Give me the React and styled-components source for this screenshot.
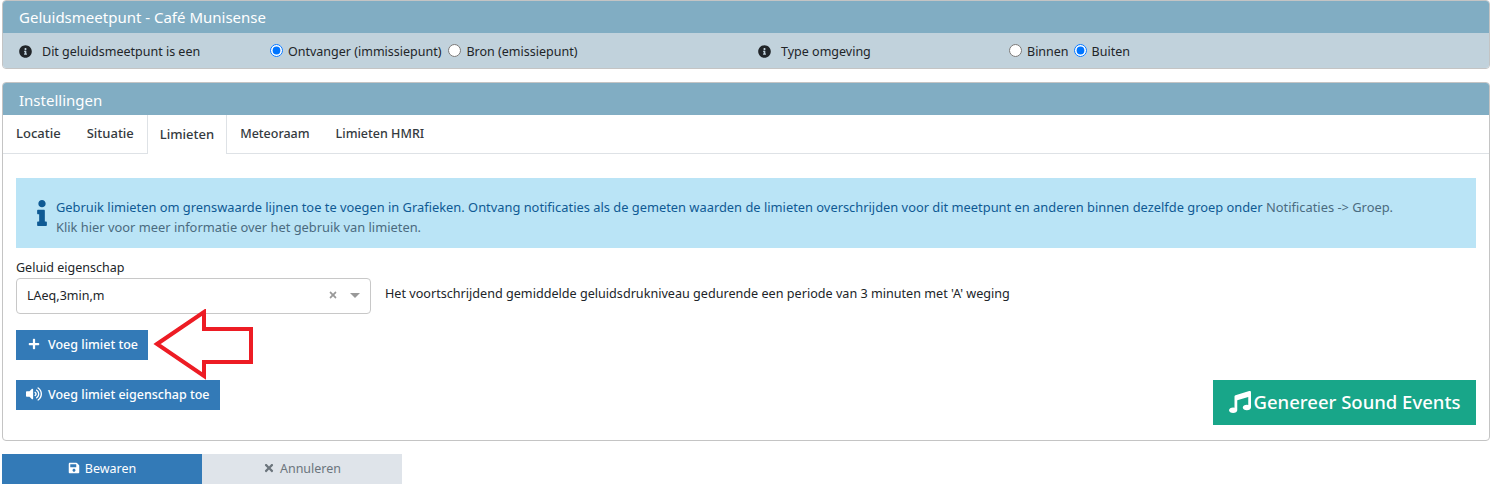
import styled, { createGlobalStyle } from 'styled-components';
import { FaInfo, FaInfoCircle, FaMusic, FaPlus, FaSave, FaTimes, FaVolumeUp } from 'react-icons/fa';

const GlobalStyle = createGlobalStyle`
  html, body {
    margin: 0;
    background: #fff;
  }
  body {
    font-family: 'Noto Sans', 'DejaVu Sans', sans-serif;
    font-size: 12.5px;
    color: #212529;
  }
`;

const App = () => {
  return (
    <Page>
      <GlobalStyle />
      <Panel>
        <PanelHeader>Geluidsmeetpunt - Café Munisense</PanelHeader>
        <OptionBar>
          <OptionLabel $width="251px">
            <FaInfoCircle size={13} />
            <span>Dit geluidsmeetpunt is een</span>
          </OptionLabel>
          <RadioGroup $width="488px" $gap="7px">
            <RadioLabel>
              <input type="radio" name="kind" defaultChecked />
              Ontvanger (immissiepunt)
            </RadioLabel>
            <RadioLabel>
              <input type="radio" name="kind" />
              Bron (emissiepunt)
            </RadioLabel>
          </RadioGroup>
          <OptionLabel $width="251px">
            <FaInfoCircle size={13} />
            <span>Type omgeving</span>
          </OptionLabel>
          <RadioGroup $gap="5px">
            <RadioLabel>
              <input type="radio" name="env" />
              Binnen
            </RadioLabel>
            <RadioLabel>
              <input type="radio" name="env" defaultChecked />
              Buiten
            </RadioLabel>
          </RadioGroup>
        </OptionBar>
      </Panel>

      <SettingsPanel>
        <SettingsHeader>Instellingen</SettingsHeader>
        <Tabs>
          <Tab $size="13px">Locatie</Tab>
          <Tab $size="13px">Situatie</Tab>
          <Tab $size="13px" $active>
            Limieten
          </Tab>
          <Tab $size="12.5px">Meteoraam</Tab>
          <Tab $size="12.5px">Limieten HMRI</Tab>
        </Tabs>
        <TabBody>
          <Alert>
            <AlertIcon>
              <FaInfo size={26} />
            </AlertIcon>
            <AlertText>
              <div>
                Gebruik limieten om grenswaarde lijnen toe te voegen in Grafieken. Ontvang notificaties als de gemeten
                waarden de limieten overschrijden voor dit meetpunt en anderen binnen dezelfde groep onder{' '}
                <Muted>Notificaties -&gt; Groep.</Muted>
              </div>
              <Muted>Klik hier voor meer informatie over het gebruik van limieten.</Muted>
            </AlertText>
          </Alert>

          <FieldLabel>Geluid eigenschap</FieldLabel>
          <FieldRow>
            <Select>
              <span>LAeq,3min,m</span>
              <SelectControls>
                <FaTimes size={10} />
                <Caret />
              </SelectControls>
            </Select>
            <FieldHint>Het voortschrijdend gemiddelde geluidsdrukniveau gedurende een periode van 3 minuten met 'A' weging</FieldHint>
          </FieldRow>

          <AddRow>
            <BlueButton>
              <ButtonIcon>
                <FaPlus size={12} />
              </ButtonIcon>
              Voeg limiet toe
            </BlueButton>
            <Arrow width="102" height="72" viewBox="0 0 102 72">
              <path d="M4 35 L51 3 L51 20 L98 20 L98 53 L51 53 L51 67 Z" fill="#fff" stroke="#ed1c24" strokeWidth="4" />
            </Arrow>
          </AddRow>

          <BottomRow>
            <BlueButton>
              <ButtonIcon>
                <FaVolumeUp size={16} />
              </ButtonIcon>
              Voeg limiet eigenschap toe
            </BlueButton>
            <GreenButton>
              <FaMusic size={22} />
              Genereer Sound Events
            </GreenButton>
          </BottomRow>
        </TabBody>
      </SettingsPanel>

      <Footer>
        <SaveButton>
          <FaSave size={12} />
          Bewaren
        </SaveButton>
        <CancelButton>
          <FaTimes size={12} />
          Annuleren
        </CancelButton>
      </Footer>
    </Page>
  );
};

const Page = styled.div`
  width: 1493px;
  height: 485px;
  padding: 0 3px 0 2px;
  box-sizing: border-box;
  overflow: hidden;
`;

const Panel = styled.section`
  border: 1px solid #c4c4c4;
  border-radius: 4px;
  overflow: hidden;
`;

const SettingsPanel = styled(Panel)`
  margin-top: 13px;
`;

const PanelHeader = styled.h2`
  margin: 0;
  height: 32px;
  padding: 0 16px;
  box-sizing: border-box;
  display: flex;
  align-items: center;
  background: #81adc3;
  color: #fff;
  font-size: 15px;
  font-weight: 400;
`;

const SettingsHeader = styled(PanelHeader)`
  padding-top: 2px;
`;

const OptionBar = styled.div`
  height: 35px;
  padding: 2px 16px 0;
  box-sizing: border-box;
  display: flex;
  align-items: center;
  background: #c1d2dc;
`;

const OptionLabel = styled.div`
  width: ${(p) => p.$width};
  display: flex;
  align-items: center;
  gap: 10px;
  color: #212529;
`;

const RadioGroup = styled.div`
  width: ${(p) => p.$width || 'auto'};
  display: flex;
  align-items: center;
  gap: ${(p) => p.$gap};
`;

const RadioLabel = styled.label`
  display: flex;
  align-items: center;
  gap: 5px;

  input {
    margin: 0 0 2px;
    width: 13px;
    height: 13px;
  }
`;

const Tabs = styled.nav`
  height: 39px;
  display: flex;
  border-bottom: 1px solid #dee2e6;
  box-sizing: border-box;
`;

const Tab = styled.a`
  padding: 0 12px 2px;
  display: flex;
  align-items: center;
  font-size: ${(p) => p.$size};
  font-weight: 500;
  color: #343a40;
  box-sizing: border-box;
  height: ${(p) => (p.$active ? '39px' : '38px')};
  background: #fff;
  border-left: 1px solid ${(p) => (p.$active ? '#dee2e6' : 'transparent')};
  border-right: 1px solid ${(p) => (p.$active ? '#dee2e6' : 'transparent')};
`;

const TabBody = styled.div`
  padding: 24px 13px 15px;
`;

const Alert = styled.div`
  height: 70px;
  display: flex;
  align-items: center;
  padding-left: 20px;
  gap: 8px;
  background: #bae4f6;
  color: #0f5a94;
`;

const AlertIcon = styled.div`
  width: 12px;
  display: flex;
  justify-content: center;
  color: #0f5a94;
`;

const AlertText = styled.div`
  padding-top: 8px;
  font-size: 12.86px;
  line-height: 20px;
`;

const Muted = styled.span`
  color: #4a6b80;
`;

const FieldLabel = styled.div`
  margin-top: 11px;
  line-height: 18px;
`;

const FieldRow = styled.div`
  margin-top: 1px;
  display: flex;
  align-items: center;
  gap: 14px;
`;

const Select = styled.div`
  width: 355px;
  height: 36px;
  box-sizing: border-box;
  padding: 0 10px 2px;
  display: flex;
  align-items: center;
  justify-content: space-between;
  border: 1px solid #c8c8c8;
  border-radius: 4px;
  background: #fff;
`;

const SelectControls = styled.div`
  display: flex;
  align-items: center;
  gap: 12px;
  color: #999;
`;

const Caret = styled.i`
  width: 0;
  height: 0;
  border-left: 5px solid transparent;
  border-right: 5px solid transparent;
  border-top: 5px solid #999;
`;

const FieldHint = styled.span`
  margin-bottom: 6px;
  font-size: 12.62px;
  color: #212529;
`;

const AddRow = styled.div`
  position: relative;
  margin-top: 16px;
`;

const BlueButton = styled.button`
  height: 30px;
  padding: 0 10px 2px;
  display: inline-flex;
  align-items: center;
  gap: 6px;
  border: 0;
  background: #337ab7;
  color: #fff;
  font: inherit;
  font-weight: 500;
`;

const ButtonIcon = styled.span`
  width: 16px;
  display: flex;
  justify-content: center;
`;

const Arrow = styled.svg`
  position: absolute;
  left: 137px;
  top: -21px;
`;

const BottomRow = styled.div`
  margin-top: 20px;
  display: flex;
  align-items: flex-start;
  justify-content: space-between;
`;

const GreenButton = styled.button`
  width: 263px;
  height: 45px;
  padding: 0 0 2px;
  display: inline-flex;
  align-items: center;
  justify-content: center;
  gap: 3px;
  border: 0;
  background: #18a689;
  color: #fff;
  font: inherit;
  font-size: 18.5px;
  font-weight: 500;
`;

const Footer = styled.div`
  margin-top: 13px;
  display: flex;
`;

const FooterButton = styled.button`
  width: 200px;
  height: 30px;
  padding: 0 0 2px;
  display: flex;
  align-items: center;
  justify-content: center;
  gap: 5px;
  border: 0;
  font: inherit;
`;

const SaveButton = styled(FooterButton)`
  background: #337ab7;
  color: #fff;
`;

const CancelButton = styled(FooterButton)`
  background: #dfe4ea;
  color: #6c757d;
`;

export default App;
